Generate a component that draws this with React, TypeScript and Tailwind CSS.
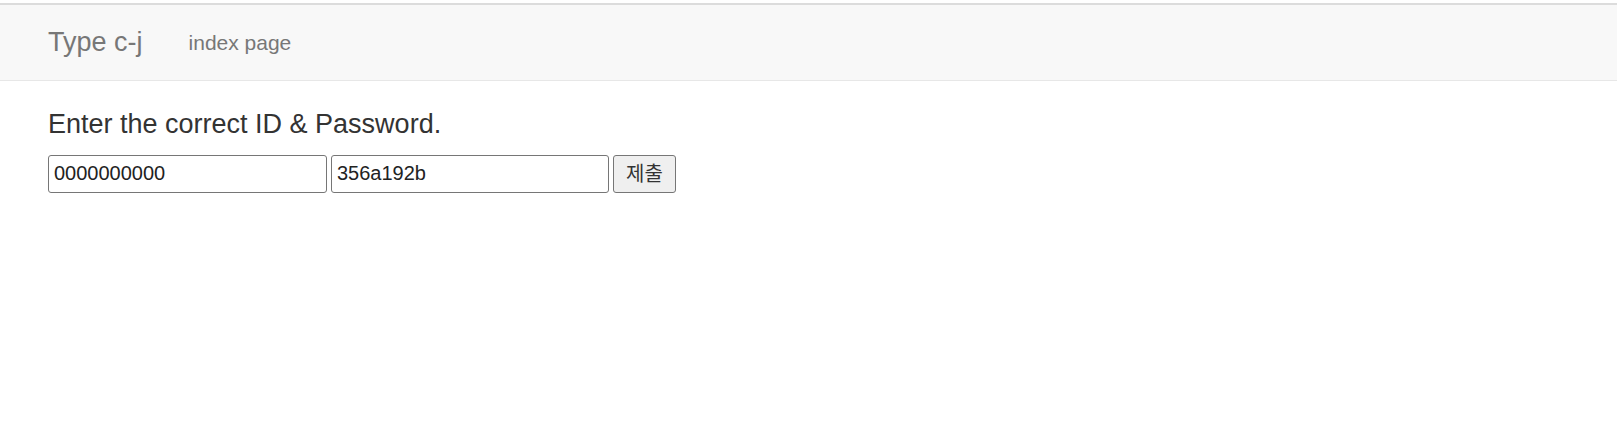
export default function App() {
  return (
    <div className="min-h-[424px] bg-white pt-[3px] font-['Liberation_Sans','Noto_Sans_CJK_KR',sans-serif]">
      {/* navbar */}
      <nav className="flex h-[78px] items-center border-t-2 border-b border-t-[#dcdcdc] border-b-[#e7e7e7] bg-[#f8f8f8] pl-[48px]">
        <span className="text-[27px] leading-none text-[#777]">Type c-j</span>
        <span className="ml-[46px] text-[21px] leading-none text-[#777]">index page</span>
      </nav>

      <div className="pl-[48px]">
        <h4 className="mt-[29px] mb-[15px] text-[27px] leading-[1.1] font-normal text-[#333]">
          Enter the correct ID &amp; Password.
        </h4>
        <form className="flex items-center gap-[4px]" onSubmit={(e) => e.preventDefault()}>
          <input
            type="text"
            defaultValue="0000000000"
            className="h-[38px] w-[279px] rounded-[3px] border border-[#767676] bg-white pl-[5px] text-[20px] text-[#222] outline-none"
          />
          <input
            type="text"
            defaultValue="356a192b"
            className="h-[38px] w-[278px] rounded-[3px] border border-[#767676] bg-white pl-[5px] text-[20px] text-[#222] outline-none"
          />
          <button
            type="submit"
            className="h-[38px] w-[63px] rounded-[3px] border border-[#767676] bg-[#efefef] text-[20px] text-[#333]"
          >
            제출
          </button>
        </form>
      </div>
    </div>
  );
}
